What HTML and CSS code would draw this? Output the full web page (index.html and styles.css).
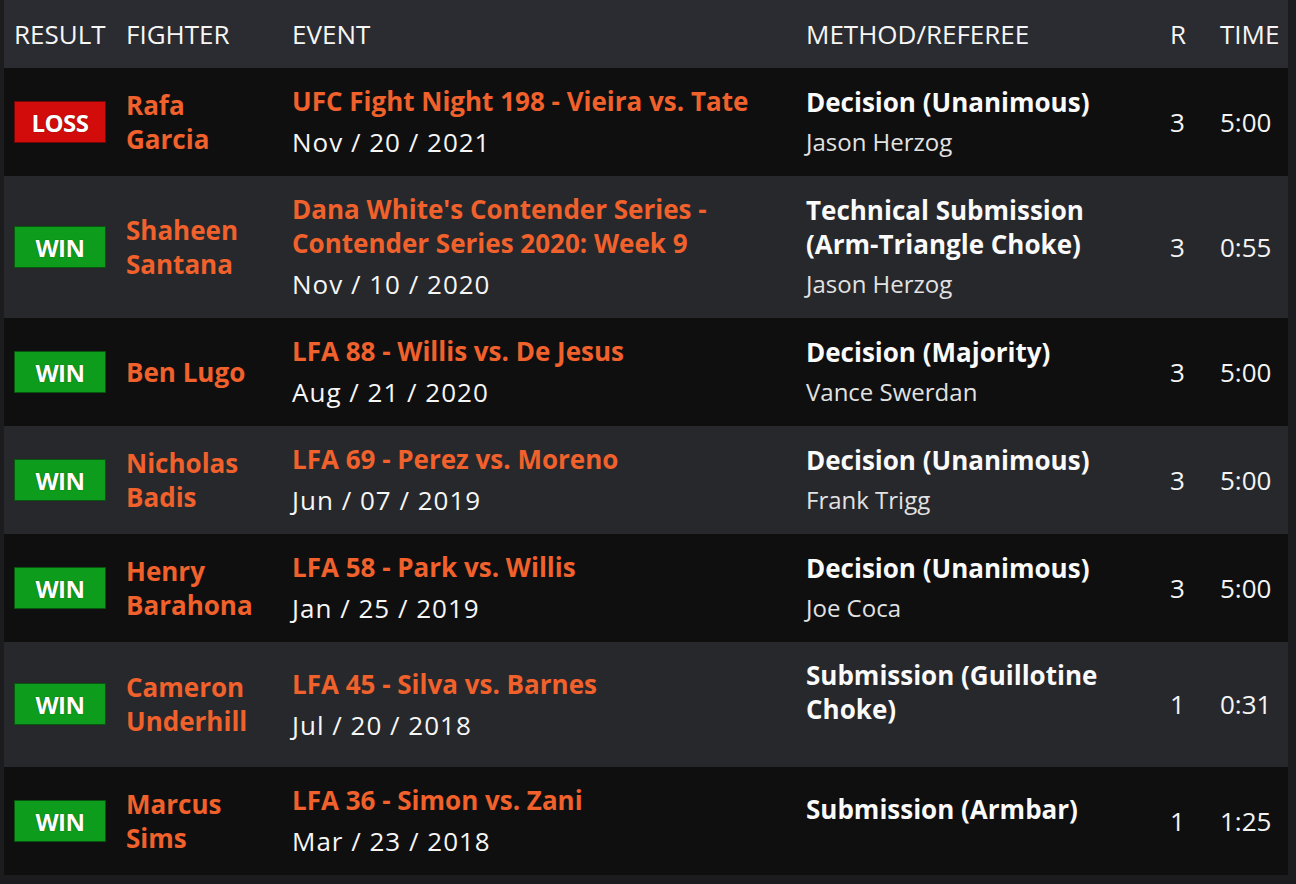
FILE: index.html
```html
<!DOCTYPE html>
<html lang="en">
<head>
<meta charset="utf-8">
<title>Fight Record</title>
<link rel="stylesheet" href="styles.css">
</head>
<body>
<table class="record">
  <colgroup>
    <col class="c-result"><col class="c-fighter"><col class="c-event"><col class="c-method"><col class="c-round"><col class="c-time">
  </colgroup>
  <thead>
    <tr>
      <th>RESULT</th><th>FIGHTER</th><th>EVENT</th><th>METHOD/REFEREE</th><th>R</th><th>TIME</th>
    </tr>
  </thead>
  <tbody>
    <tr class="dark">
      <td><span class="badge loss">LOSS</span></td>
      <td class="fighter">Rafa Garcia</td>
      <td><div class="ev">UFC Fight Night 198 - Vieira vs. Tate</div><div class="date">Nov / 20 / 2021</div></td>
      <td><div class="method">Decision (Unanimous)</div><div class="ref">Jason Herzog</div></td>
      <td class="num">3</td><td class="num">5:00</td>
    </tr>
    <tr class="light">
      <td><span class="badge win">WIN</span></td>
      <td class="fighter">Shaheen Santana</td>
      <td><div class="ev">Dana White's Contender Series - Contender Series 2020: Week 9</div><div class="date">Nov / 10 / 2020</div></td>
      <td><div class="method">Technical Submission (Arm-Triangle Choke)</div><div class="ref">Jason Herzog</div></td>
      <td class="num">3</td><td class="num">0:55</td>
    </tr>
    <tr class="dark">
      <td><span class="badge win">WIN</span></td>
      <td class="fighter">Ben Lugo</td>
      <td><div class="ev">LFA 88 - Willis vs. De Jesus</div><div class="date">Aug / 21 / 2020</div></td>
      <td><div class="method">Decision (Majority)</div><div class="ref">Vance Swerdan</div></td>
      <td class="num">3</td><td class="num">5:00</td>
    </tr>
    <tr class="light">
      <td><span class="badge win">WIN</span></td>
      <td class="fighter">Nicholas Badis</td>
      <td><div class="ev">LFA 69 - Perez vs. Moreno</div><div class="date">Jun / 07 / 2019</div></td>
      <td><div class="method">Decision (Unanimous)</div><div class="ref">Frank Trigg</div></td>
      <td class="num">3</td><td class="num">5:00</td>
    </tr>
    <tr class="dark">
      <td><span class="badge win">WIN</span></td>
      <td class="fighter">Henry Barahona</td>
      <td><div class="ev">LFA 58 - Park vs. Willis</div><div class="date">Jan / 25 / 2019</div></td>
      <td><div class="method">Decision (Unanimous)</div><div class="ref">Joe Coca</div></td>
      <td class="num">3</td><td class="num">5:00</td>
    </tr>
    <tr class="light">
      <td><span class="badge win">WIN</span></td>
      <td class="fighter">Cameron Underhill</td>
      <td><div class="ev">LFA 45 - Silva vs. Barnes</div><div class="date">Jul / 20 / 2018</div></td>
      <td><div class="method">Submission (Guillotine Choke)</div><div class="ref empty"></div></td>
      <td class="num">1</td><td class="num">0:31</td>
    </tr>
    <tr class="dark">
      <td><span class="badge win">WIN</span></td>
      <td class="fighter">Marcus Sims</td>
      <td><div class="ev">LFA 36 - Simon vs. Zani</div><div class="date">Mar / 23 / 2018</div></td>
      <td><div class="method">Submission (Armbar)</div><div class="ref empty"></div></td>
      <td class="num">1</td><td class="num">1:25</td>
    </tr>
  </tbody>
</table>
</body>
</html>
```

FILE: styles.css
```css
html, body {
  margin: 0;
  padding: 0;
  background: #1c1c1f;
}
body {
  padding: 0 4px 7px 4px;
  font-family: "Open Sans", "Noto Sans", sans-serif;
  color: #f4f4f4;
}
.record {
  width: 1284px;
  border-collapse: collapse;
  table-layout: fixed;
}
.c-result { width: 112px; }
.c-fighter { width: 166px; }
.c-event { width: 514px; }
.c-method { width: 364px; }
.c-round { width: 50px; }
.c-time { width: 78px; }

.record th {
  background: #2b2c31;
  height: 68px;
  padding: 0 10px;
  text-align: left;
  font-weight: 500;
  font-size: 26px;
  color: #f6f6f6;
  vertical-align: middle;
  white-space: nowrap;
}
.record td {
  padding: 16px 10px 17px 10px;
  vertical-align: middle;
  font-size: 26px;
  line-height: 34px;
}
.record td.fighter {
  padding-right: 18px;
}
tr.dark td { background: #0f0f10; }
tr.light td { background: #27282c; }

.badge {
  display: inline-block;
  width: 92px;
  height: 42px;
  line-height: 41px;
  box-sizing: border-box;
  text-align: center;
  font-size: 24px;
  font-weight: 700;
  letter-spacing: -0.5px;
  color: #fff;
  border: 1px solid rgba(0, 0, 0, 0.45);
  text-shadow: 0 0 1px rgba(0, 0, 0, 0.6);
  vertical-align: middle;
}
.badge.loss { background: #d20b0b; }
.badge.win { background: #0d9c1c; }

.fighter {
  color: #f0612c;
  font-weight: 700;
}
.ev {
  color: #f0612c;
  font-weight: 700;
}
.date {
  margin-top: 7px;
  color: #f6f6f6;
  letter-spacing: 1px;
}
.method {
  font-weight: 700;
  color: #fafafa;
}
.ref {
  margin-top: 6px;
  font-size: 24px;
  color: #e2e2e2;
}
.ref.empty {
  margin-top: 0;
  height: 24px;
}
.num {
  color: #f4f4f4;
}
```
